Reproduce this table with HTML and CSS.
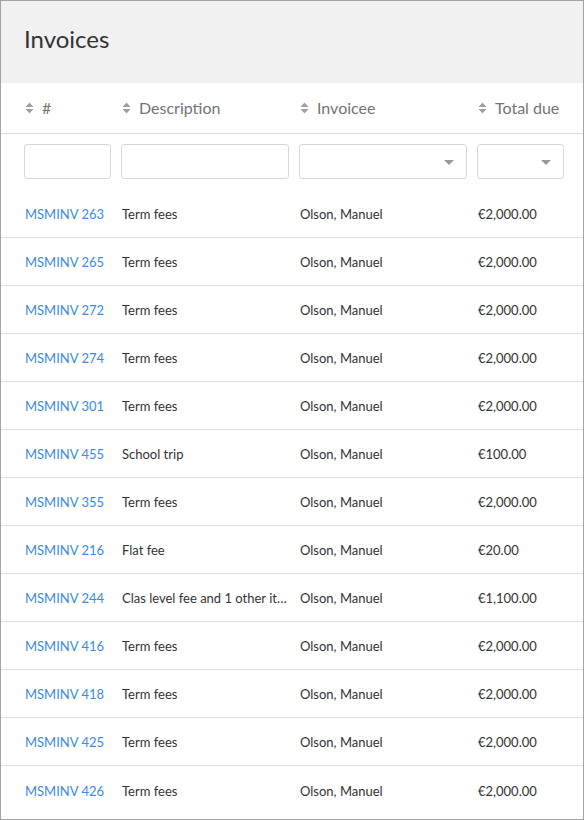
FILE: index.html
```html
<!DOCTYPE html>
<html>
<head>
<meta charset="utf-8">
<link rel="stylesheet" href="styles.css">
</head>
<body>
<div class="frame">
  <div class="title-bar"><h1 class="title">Invoices</h1></div>
  <div class="row head-row">
    <div class="hcell"><span class="sort"><svg width="9" height="12" viewBox="0 0 9 12"><path d="M0.5 5 L4.5 0.5 L8.5 5 Z M0.5 7 L4.5 11.5 L8.5 7 Z" fill="#a0a0a0"/></svg></span>#</div>
    <div class="hcell"><span class="sort"><svg width="9" height="12" viewBox="0 0 9 12"><path d="M0.5 5 L4.5 0.5 L8.5 5 Z M0.5 7 L4.5 11.5 L8.5 7 Z" fill="#a0a0a0"/></svg></span>Description</div>
    <div class="hcell"><span class="sort"><svg width="9" height="12" viewBox="0 0 9 12"><path d="M0.5 5 L4.5 0.5 L8.5 5 Z M0.5 7 L4.5 11.5 L8.5 7 Z" fill="#a0a0a0"/></svg></span>Invoicee</div>
    <div class="hcell"><span class="sort"><svg width="9" height="12" viewBox="0 0 9 12"><path d="M0.5 5 L4.5 0.5 L8.5 5 Z M0.5 7 L4.5 11.5 L8.5 7 Z" fill="#a0a0a0"/></svg></span>Total due</div>
  </div>
  <div class="row filter-row">
    <div class="box"></div>
    <div class="box"></div>
    <div class="box select"><span class="caret"></span></div>
    <div class="box select"><span class="caret"></span></div>
  </div>
  <div class="rows">
    <div class="row data"><a class="link">MSMINV 263</a><span class="desc">Term fees</span><span>Olson, Manuel</span><span>€2,000.00</span></div>
    <div class="row data"><a class="link">MSMINV 265</a><span class="desc">Term fees</span><span>Olson, Manuel</span><span>€2,000.00</span></div>
    <div class="row data"><a class="link">MSMINV 272</a><span class="desc">Term fees</span><span>Olson, Manuel</span><span>€2,000.00</span></div>
    <div class="row data"><a class="link">MSMINV 274</a><span class="desc">Term fees</span><span>Olson, Manuel</span><span>€2,000.00</span></div>
    <div class="row data"><a class="link">MSMINV 301</a><span class="desc">Term fees</span><span>Olson, Manuel</span><span>€2,000.00</span></div>
    <div class="row data"><a class="link">MSMINV 455</a><span class="desc">School trip</span><span>Olson, Manuel</span><span>€100.00</span></div>
    <div class="row data"><a class="link">MSMINV 355</a><span class="desc">Term fees</span><span>Olson, Manuel</span><span>€2,000.00</span></div>
    <div class="row data"><a class="link">MSMINV 216</a><span class="desc">Flat fee</span><span>Olson, Manuel</span><span>€20.00</span></div>
    <div class="row data"><a class="link">MSMINV 244</a><span class="desc">Clas level fee and 1 other item for this invoice</span><span>Olson, Manuel</span><span>€1,100.00</span></div>
    <div class="row data"><a class="link">MSMINV 416</a><span class="desc">Term fees</span><span>Olson, Manuel</span><span>€2,000.00</span></div>
    <div class="row data"><a class="link">MSMINV 418</a><span class="desc">Term fees</span><span>Olson, Manuel</span><span>€2,000.00</span></div>
    <div class="row data"><a class="link">MSMINV 425</a><span class="desc">Term fees</span><span>Olson, Manuel</span><span>€2,000.00</span></div>
    <div class="row data last"><a class="link">MSMINV 426</a><span class="desc">Term fees</span><span>Olson, Manuel</span><span>€2,000.00</span></div>
  </div>
</div>
</body>
</html>
```

FILE: styles.css
```css
* { box-sizing: border-box; }
html, body { margin: 0; padding: 0; background: #fff; }
body { font-family: Lato, "Open Sans", sans-serif; color: #333; }
.frame {
  width: 584px;
  height: 820px;
  border: 1px solid #a3a3a3;
  overflow: hidden;
  background: #fff;
}
.title-bar {
  background: #f1f1f1;
  height: 82px;
  padding: 24px 0 0 23px;
}
.title {
  margin: 0;
  font-size: 24px;
  font-weight: 400;
  color: #333;
  line-height: 28px;
}
.row {
  display: grid;
  grid-template-columns: 87px 168px 168px 87px;
  column-gap: 10px;
  padding-left: 23px;
  align-items: center;
}
.head-row {
  height: 51px;
  border-bottom: 1px solid #dedede;
  padding-bottom: 1px;
}
.hcell {
  font-size: 16px;
  color: #737373;
  display: flex;
  align-items: center;
  white-space: nowrap;
  padding-left: 1px;
}
.sort { display: inline-flex; margin-right: 8px; }
.sort svg { display: block; }
.filter-row {
  height: 56px;
  padding-top: 10px;
  align-items: start;
}
.box {
  height: 35px;
  border: 1px solid #d8d8d8;
  border-radius: 3px;
  background: #fff;
  position: relative;
}
.caret {
  position: absolute;
  right: 12px;
  top: 15px;
  width: 0; height: 0;
  border-left: 5px solid transparent;
  border-right: 5px solid transparent;
  border-top: 5px solid #999;
}
.data {
  height: 48px;
  border-bottom: 1px solid #e0e0e0;
  font-size: 13px;
  color: #333;
  padding-top: 1px;
}
.data.last { border-bottom: none; }
.data > * { padding-left: 1px; white-space: nowrap; }
.link { color: #3b8ae6; text-decoration: none; }
.desc { overflow: hidden; text-overflow: ellipsis; padding-right: 1px; }
```
